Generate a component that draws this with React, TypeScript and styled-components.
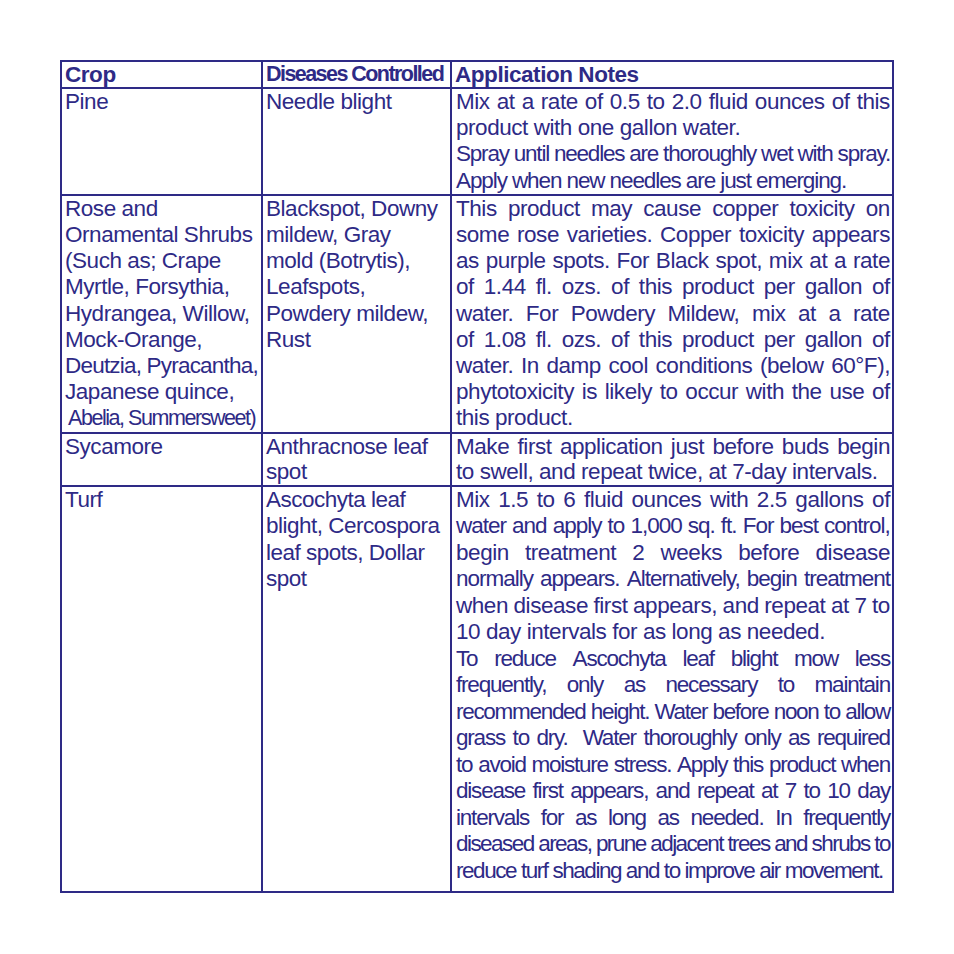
import React from 'react'
import styled, { createGlobalStyle } from 'styled-components'

const ink = '#2e2a86'

const GlobalStyle = createGlobalStyle`
  body {
    margin: 0;
    background: #ffffff;
    font-family: 'Liberation Sans', Arial, sans-serif;
  }
`

const Page = styled.div`
  padding: 60px 0 0 60px;
`

const Table = styled.table`
  width: 832px;
  table-layout: fixed;
  border-collapse: collapse;
  color: ${ink};
  font-size: 22.5px;
  letter-spacing: -0.45px;
`

const Col = styled.col<{ $w: number }>`
  width: ${(p) => p.$w}px;
`

const HeadCell = styled.th<{ $squeeze?: boolean }>`
  border: 2px solid ${ink};
  padding: 0 3px;
  text-align: left;
  font-weight: 700;
  line-height: 25px;
  white-space: nowrap;
  overflow: hidden;
  font-size: ${(p) => (p.$squeeze ? '21.5px' : '22.5px')};
  letter-spacing: ${(p) => (p.$squeeze ? '-1.55px' : '-0.45px')};
`

const Cell = styled.td<{ $extra?: number; $lh?: number }>`
  border: 2px solid ${ink};
  padding: 0 3px ${(p) => p.$extra ?? 0}px 3px;
  vertical-align: top;
  line-height: ${(p) => p.$lh ?? 26.2}px;
`

const NoteCell = styled(Cell)`
  padding-left: 4px;
  padding-right: 2px;
`

const Line = styled.span<{ $full?: boolean; $tight?: number; $indent?: number; $size?: number }>`
  display: ${(p) => (p.$full ? 'flex' : 'block')};
  justify-content: space-between;
  column-gap: 4px;
  white-space: nowrap;
  letter-spacing: ${(p) => (p.$tight !== undefined ? `${p.$tight}px` : 'inherit')};
  font-size: ${(p) => (p.$size ? `${p.$size}px` : 'inherit')};
  padding-left: ${(p) => p.$indent ?? 0}px;
`

const Word = styled.span`
  flex: none;
`

type L = { t: string; full?: boolean; tight?: number; indent?: number; size?: number }

const Lines = ({ lines }: { lines: L[] }) => (
  <>
    {lines.map((l, i) => (
      <Line key={i} $full={l.full} $tight={l.tight} $indent={l.indent} $size={l.size}>
        {l.full ? l.t.split(' ').map((w, j) => <Word key={j}>{w}</Word>) : l.t}
      </Line>
    ))}
  </>
)

const T = -1.2

const rows: { crop: L[]; disease: L[]; notes: L[]; extra?: number; lh?: number }[] = [
  {
    crop: [{ t: 'Pine' }],
    disease: [{ t: 'Needle blight' }],
    notes: [
      { t: 'Mix at a rate of 0.5 to 2.0 fluid ounces of this', full: true },
      { t: 'product with one gallon water.' },
      { t: 'Spray until needles are thoroughly wet with spray.', full: true, tight: T },
      { t: 'Apply when new needles are just emerging.', tight: -1.1 },
    ],
  },
  {
    crop: [
      { t: 'Rose and' },
      { t: 'Ornamental Shrubs' },
      { t: '(Such as; Crape' },
      { t: 'Myrtle, Forsythia,' },
      { t: 'Hydrangea, Willow,' },
      { t: 'Mock-Orange,' },
      { t: 'Deutzia, Pyracantha,', tight: -0.8 },
      { t: 'Japanese quince,' },
      { t: 'Abelia, Summersweet)', tight: -1.45, indent: 3, size: 21.5 },
    ],
    disease: [
      { t: 'Blackspot, Downy' },
      { t: 'mildew, Gray' },
      { t: 'mold (Botrytis),' },
      { t: 'Leafspots,' },
      { t: 'Powdery mildew,' },
      { t: 'Rust' },
    ],
    notes: [
      { t: 'This product may cause copper toxicity on', full: true },
      { t: 'some rose varieties. Copper toxicity appears', full: true },
      { t: 'as purple spots. For Black spot, mix at a rate', full: true },
      { t: 'of 1.44 fl. ozs. of this product per gallon of', full: true },
      { t: 'water. For Powdery Mildew, mix at a rate', full: true },
      { t: 'of 1.08 fl. ozs. of this product per gallon of', full: true },
      { t: 'water. In damp cool conditions (below 60°F),', full: true },
      { t: 'phytotoxicity is likely to occur with the use of', full: true },
      { t: 'this product.' },
    ],
  },
  {
    crop: [{ t: 'Sycamore' }],
    disease: [{ t: 'Anthracnose leaf' }, { t: 'spot' }],
    notes: [
      { t: 'Make first application just before buds begin', full: true },
      { t: 'to swell, and repeat twice, at 7-day intervals.' },
    ],
    lh: 25.6,
  },
  {
    crop: [{ t: 'Turf' }],
    disease: [
      { t: 'Ascochyta leaf', tight: -0.5 },
      { t: 'blight, Cercospora', tight: -0.5 },
      { t: 'leaf spots, Dollar', tight: -0.5 },
      { t: 'spot', tight: -0.5 },
    ],
    notes: [
      { t: 'Mix 1.5 to 6 fluid ounces with 2.5 gallons of', full: true },
      { t: 'water and apply to 1,000 sq. ft. For best control,', full: true, tight: -1.0 },
      { t: 'begin treatment 2 weeks before disease', full: true },
      { t: 'normally appears. Alternatively, begin treatment', full: true, tight: -1.0 },
      { t: 'when disease first appears, and repeat at 7 to', full: true },
      { t: '10 day intervals for as long as needed.' },
      { t: 'To reduce Ascochyta leaf blight mow less', full: true, tight: T },
      { t: 'frequently, only as necessary to maintain', full: true, tight: T },
      { t: 'recommended height. Water before noon to allow', full: true, tight: -1.3 },
      { t: 'grass to dry.  Water thoroughly only as required', full: true, tight: T },
      { t: 'to avoid moisture stress. Apply this product when', full: true, tight: -1.25 },
      { t: 'disease first appears, and repeat at 7 to 10 day', full: true, tight: T },
      { t: 'intervals for as long as needed. In frequently', full: true, tight: T },
      { t: 'diseased areas, prune adjacent trees and shrubs to', full: true, tight: -1.55 },
      { t: 'reduce turf shading and to improve air movement.', tight: -1.45 },
    ],
    extra: 7,
    lh: 26.5,
  },
]

export default function App() {
  return (
    <Page>
      <GlobalStyle />
      <Table>
        <colgroup>
          <Col $w={201} />
          <Col $w={189} />
          <Col $w={442} />
        </colgroup>
        <thead>
          <tr>
            <HeadCell>Crop</HeadCell>
            <HeadCell $squeeze>Diseases Controlled</HeadCell>
            <HeadCell>Application Notes</HeadCell>
          </tr>
        </thead>
        <tbody>
          {rows.map((r, i) => (
            <tr key={i}>
              <Cell $extra={r.extra} $lh={r.lh}>
                <Lines lines={r.crop} />
              </Cell>
              <Cell $extra={r.extra} $lh={r.lh}>
                <Lines lines={r.disease} />
              </Cell>
              <NoteCell $extra={r.extra} $lh={r.lh}>
                <Lines lines={r.notes} />
              </NoteCell>
            </tr>
          ))}
        </tbody>
      </Table>
    </Page>
  )
}
